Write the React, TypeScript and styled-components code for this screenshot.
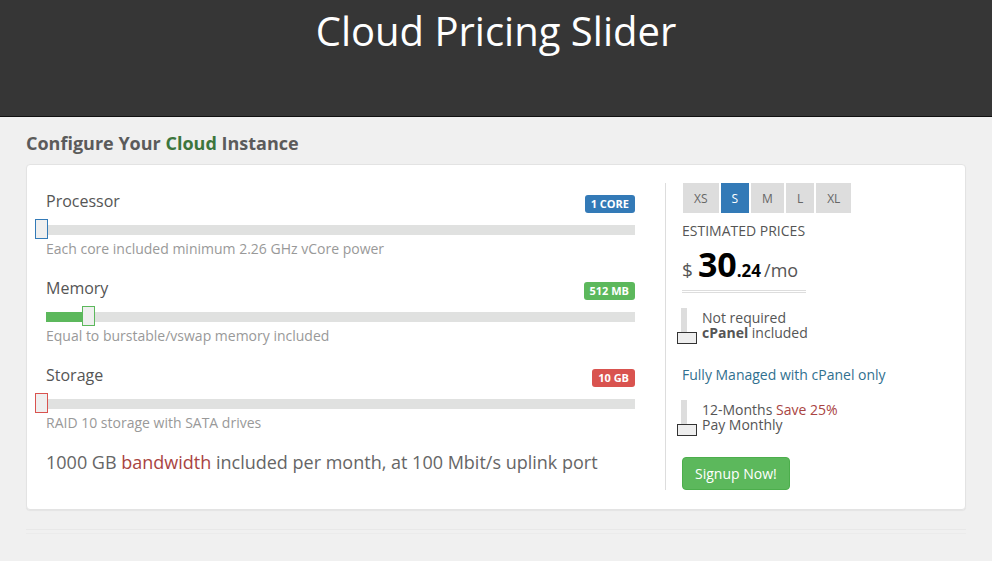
import * as React from 'react';
import styled, { createGlobalStyle } from 'styled-components';

interface Option {
  label: string;
  badge: string;
  desc: string;
  color: string;
  fill: number;
  thumb: number;
}

const options: Option[] = [
  {
    label: 'Processor',
    badge: '1 CORE',
    desc: 'Each core included minimum 2.26 GHz vCore power',
    color: '#337ab7',
    fill: 0,
    thumb: -11
  },
  {
    label: 'Memory',
    badge: '512 MB',
    desc: 'Equal to burstable/vswap memory included',
    color: '#5cb85c',
    fill: 38,
    thumb: 36
  },
  {
    label: 'Storage',
    badge: '10 GB',
    desc: 'RAID 10 storage with SATA drives',
    color: '#d9534f',
    fill: 0,
    thumb: -11
  }
];

const sizes = ['XS', 'S', 'M', 'L', 'XL'];

const App: React.FunctionComponent = () => {
  const [size, setSize] = React.useState('S');

  return (
    <React.Fragment>
      <GlobalStyle />
      <Header>
        <Title>Cloud Pricing Slider</Title>
      </Header>
      <Container>
        <SectionTitle>
          Configure Your <Green>Cloud</Green> Instance
        </SectionTitle>
        <Card>
          <LeftColumn>
            {options.map(option => (
              <Group key={option.label}>
                <GroupHead>
                  <GroupLabel>{option.label}</GroupLabel>
                  <Badge $color={option.color}>{option.badge}</Badge>
                </GroupHead>
                <Track>
                  <Fill $color={option.color} style={{ width: option.fill }} />
                  <Thumb $color={option.color} style={{ left: option.thumb }} />
                </Track>
                <Desc>{option.desc}</Desc>
              </Group>
            ))}
            <Bandwidth>
              1000 GB <Red>bandwidth</Red> included per month, at 100 Mbit/s uplink port
            </Bandwidth>
          </LeftColumn>

          <RightColumn>
            <SizeRow>
              {sizes.map(s => (
                <SizeButton key={s} $active={s === size} onClick={() => setSize(s)}>
                  {s}
                </SizeButton>
              ))}
            </SizeRow>
            <Estimated>Estimated prices</Estimated>
            <Price>
              <Dollar>$</Dollar>
              <Whole>30</Whole>
              <Cents>.24</Cents>
              <PerMonth>/mo</PerMonth>
            </Price>

            <ToggleRow>
              <ToggleTrack>
                <ToggleThumb />
              </ToggleTrack>
              <ToggleText>
                Not required
                <br />
                <b>cPanel</b> included
              </ToggleText>
            </ToggleRow>

            <Managed>Fully Managed with cPanel only</Managed>

            <ToggleRow>
              <ToggleTrack>
                <ToggleThumb />
              </ToggleTrack>
              <ToggleText>
                12-Months <Red>Save 25%</Red>
                <br />
                Pay Monthly
              </ToggleText>
            </ToggleRow>

            <SignupButton>Signup Now!</SignupButton>
          </RightColumn>
        </Card>
        <Rule />
      </Container>
    </React.Fragment>
  );
};

const GlobalStyle = createGlobalStyle`
  * {
    box-sizing: border-box;
  }
  body {
    margin: 0;
    background: #f0f0f0;
    font-family: 'Open Sans', 'Liberation Sans', sans-serif;
    color: #555;
  }
`;

const Header = styled('header')`
  height: 117px;
  padding-top: 9px;
  background: #363636;
  border-bottom: 1px solid #111;
`;

const Title = styled('h1')`
  margin: 0;
  text-align: center;
  font-size: 40px;
  font-weight: 400;
  line-height: 44px;
  color: #fff;
`;

const Container = styled('div')`
  width: 940px;
  margin: 0 auto;
`;

const SectionTitle = styled('h3')`
  margin: 13px 0 8px;
  font-size: 18px;
  line-height: 26px;
  font-weight: 700;
  color: #5b5b5b;
`;

const Green = styled('span')`
  color: #3c763d;
`;

const Red = styled('span')`
  color: #a94442;
`;

const Card = styled('div')`
  display: flex;
  gap: 30px;
  padding: 18px 19px 19px;
  background: #fff;
  border: 1px solid #e3e3e3;
  border-radius: 4px;
  box-shadow: 0 1px 1px rgba(0, 0, 0, 0.05);
`;

const LeftColumn = styled('div')`
  flex: 1;
  padding-top: 5px;
`;

const Group = styled('div')`
  margin-bottom: 16px;
`;

const GroupHead = styled('div')`
  display: flex;
  justify-content: space-between;
  align-items: flex-end;
  height: 26px;
`;

const GroupLabel = styled('span')`
  font-size: 16px;
  line-height: 26px;
  color: #555;
`;

const Badge = styled('span')<{ $color: string }>`
  margin-bottom: 1px;
  padding: 0 6px;
  height: 18px;
  line-height: 18px;
  font-size: 11px;
  font-weight: 700;
  color: #fff;
  background: ${p => p.$color};
  border-radius: 3px;
`;

const Track = styled('div')`
  position: relative;
  margin-top: 11px;
  height: 10px;
  background: #e0e1e0;
`;

const Fill = styled('div')<{ $color: string }>`
  height: 100%;
  background: ${p => p.$color};
`;

const Thumb = styled('div')<{ $color: string }>`
  position: absolute;
  top: -6px;
  width: 13px;
  height: 20px;
  background: #efefef;
  border: 1px solid ${p => p.$color};
`;

const Desc = styled('div')`
  margin-top: 4px;
  font-size: 14px;
  line-height: 20px;
  color: #999;
`;

const Bandwidth = styled('div')`
  margin-top: 1px;
  font-size: 18px;
  line-height: 26px;
  color: #666;
`;

const RightColumn = styled('div')`
  width: 281px;
  padding-left: 16px;
  border-left: 1px solid #ddd;
`;

const SizeRow = styled('div')`
  display: flex;
  gap: 2px;
  padding-left: 1px;
`;

const SizeButton = styled('button')<{ $active: boolean }>`
  height: 30px;
  padding: 0 11px;
  border: 0;
  border-radius: 0;
  font-family: inherit;
  font-size: 12px;
  color: ${p => (p.$active ? '#fff' : '#666')};
  background: ${p => (p.$active ? '#337ab7' : '#ddd')};
  cursor: pointer;
`;

const Estimated = styled('div')`
  margin-top: 9px;
  font-size: 14px;
  line-height: 18px;
  text-transform: uppercase;
  color: #555;
`;

const Price = styled('div')`
  display: flex;
  align-items: baseline;
  width: 124px;
  height: 49px;
  margin-top: 4px;
  padding-bottom: 6px;
  line-height: 40px;
  border-bottom: 3px double #ddd;
`;

const Dollar = styled('span')`
  margin-right: 5px;
  font-size: 19px;
  color: #555;
`;

const Whole = styled('span')`
  font-size: 34px;
  font-weight: 700;
  color: #000;
`;

const Cents = styled('span')`
  margin-right: 3px;
  font-size: 17px;
  font-weight: 700;
  color: #000;
`;

const PerMonth = styled('span')`
  font-size: 18px;
  color: #555;
`;

const ToggleRow = styled('div')`
  display: flex;
  margin-top: 15px;
`;

const ToggleTrack = styled('div')`
  position: relative;
  flex-shrink: 0;
  width: 6px;
  height: 30px;
  margin-left: -1px;
  background: #ddd;
`;

const ToggleThumb = styled('div')`
  position: absolute;
  left: -4px;
  bottom: -6px;
  width: 20px;
  height: 12px;
  background: #eee;
  border: 1px solid #333;
`;

const ToggleText = styled('div')`
  margin-left: 15px;
  padding-top: 2px;
  font-size: 14px;
  line-height: 15px;
  color: #555;
`;

const Managed = styled('div')`
  margin-top: 25px;
  font-size: 14px;
  line-height: 20px;
  color: #31708f;
`;

const SignupButton = styled('button')`
  display: block;
  margin-top: 25px;
  height: 33px;
  padding: 0 12px;
  font-family: inherit;
  font-size: 14px;
  color: #fff;
  background: #5cb85c;
  border: 1px solid #4cae4c;
  border-radius: 4px;
  cursor: pointer;
`;

const Rule = styled('hr')`
  margin: 19px 0 0;
  height: 5px;
  border: 0;
  border-top: 1px solid #e8e8e8;
  border-bottom: 1px solid #ebebeb;
`;

export default App;
